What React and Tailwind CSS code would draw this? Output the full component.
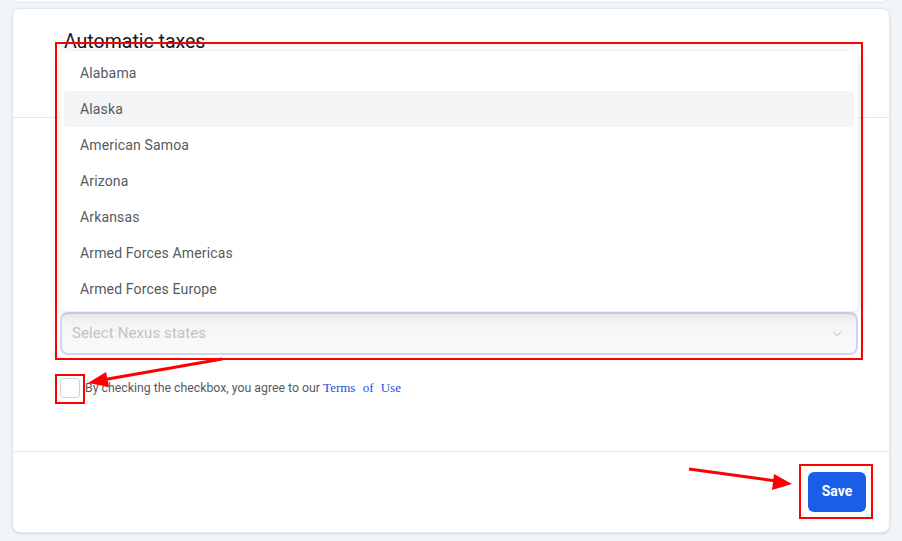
import { ChevronDown } from 'lucide-react'

const states = [
  'Alabama',
  'Alaska',
  'American Samoa',
  'Arizona',
  'Arkansas',
  'Armed Forces Americas',
  'Armed Forces Europe',
]

// Red review marks drawn over the page
function Annotations() {
  return (
    <svg className="pointer-events-none absolute left-0 top-0" width="902" height="541">
      <rect x="56" y="43" width="806" height="316" fill="none" stroke="#f00" strokeWidth="2" />
      <rect x="56" y="375" width="28" height="28" fill="none" stroke="#f00" strokeWidth="2" />
      <rect x="800" y="465" width="72" height="53" fill="none" stroke="#f00" strokeWidth="2" />
      <line x1="222" y1="359" x2="102" y2="380" stroke="#f00" strokeWidth="3" />
      <polygon points="88,383 106,372 109,387" fill="#f00" />
      <line x1="689" y1="469" x2="776" y2="481" stroke="#f00" strokeWidth="3" />
      <polygon points="792,484 774,474 772,490" fill="#f00" />
    </svg>
  )
}

export default function App() {
  return (
    <div
      className="relative h-[541px] w-[902px] overflow-hidden bg-[#f1f5f9] pt-2 pl-3 pr-3"
      style={{ fontFamily: 'Roboto, "Liberation Sans", sans-serif' }}
    >
      <div className="absolute left-3 right-3 top-[-10px] h-[13px] rounded-b-lg border border-[#e2e8f0] bg-[#fbfcfd]" />

      <div className="relative flex h-[525px] flex-col rounded-lg border border-[#e2e8f0] bg-white shadow-sm">
        {/* Header */}
        <div className="h-[109px] border-b border-[#e5e7eb] pl-[51px] pt-[21px]">
          <h2 className="text-[19.5px] leading-6 text-[#111827]">Automatic taxes</h2>
        </div>

        {/* Body */}
        <div className="relative flex-1 pl-[47px] pr-[31px] pt-[194px]">
          <div className="relative">
            {/* Open dropdown menu */}
            <div className="absolute bottom-[44px] left-0 right-0 z-10 rounded-md bg-white p-1 shadow-[0_2px_12px_rgba(0,0,0,0.12)]">
              {states.map((s, i) => (
                <div
                  key={s}
                  className={`flex h-9 items-center rounded px-4 text-[14px] tracking-[0.15px] text-[#555a61] ${i === 1 ? 'bg-[#f3f4f6]' : ''}`}
                >
                  {s}
                </div>
              ))}
            </div>

            <div className="flex h-[43px] items-center justify-between rounded-lg border-2 border-[#cbd7f3] bg-gradient-to-b from-[#f2f2f3] to-[#fbfbfb] pl-[10px] pr-3">
              <span className="text-[15px] tracking-[0.1px] text-[#c2c2c2]">Select Nexus states</span>
              <ChevronDown size={14} strokeWidth={1.5} className="text-[#a8a8a8]" />
            </div>
          </div>

          <div className="mt-[23px] flex items-center gap-[5px]">
            <div className="h-5 w-5 rounded border border-[#d1d5db] bg-white" />
            <span className="text-[12.3px] text-[#555a61]">
              By checking the checkbox, you agree to our{' '}
              <a
                className="text-[13px] text-[#1a4fe0] [word-spacing:4px]"
                style={{ fontFamily: '"Liberation Serif", serif' }}
              >
                Terms of Use
              </a>
            </span>
          </div>
        </div>

        {/* Footer */}
        <div className="flex justify-end border-t border-[#e5e7eb] pb-5 pr-[23px] pt-5">
          <button className="h-10 w-[58px] rounded-md bg-[#1a5ee8] pb-px text-[14px] font-bold text-white">
            Save
          </button>
        </div>
      </div>

      <Annotations />
    </div>
  )
}
